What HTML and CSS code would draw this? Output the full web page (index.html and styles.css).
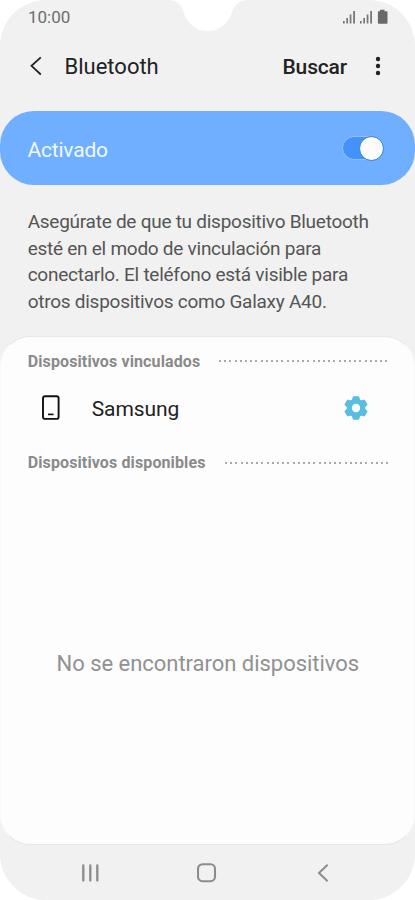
FILE: index.html
```html
<!DOCTYPE html>
<html lang="es">
<head>
<meta charset="utf-8">
<title>Bluetooth</title>
<link rel="stylesheet" href="styles.css">
</head>
<body>
<main class="phone">
  <svg class="notch" width="84" height="32" viewBox="0 0 84 32" aria-hidden="true"><path d="M3 0C10 0 14.500 4 17 11C21 23 29 31 41 31H42C54 31 63 23 66.500 11C69 4 75 0 82 0Z"/></svg>
  <div class="status">
    <span class="time">10:00</span>
    <svg width="46" height="16" viewBox="0 0 46 16" aria-hidden="true">
      <g fill="#777"><path d="M0 12h1.700v2.500H0zM3.300 9h1.700v5.500H3.300zM6.700 5.500h1.700v9H6.700zM10.200 2h1.800v12.500h-1.800z"/><path d="M17 12h1.700v2.500H17zM20.300 9h1.700v5.500h-1.700zM23.700 5.500h1.700v9h-1.700zM27.200 2h1.800v12.500h-1.800z"/></g>
      <path fill="#696969" d="M37 .800h4.500v1.400h2.200q.8 0 .8.8v10.900q0 .8-.8.8h-8q-.8 0-.8-.8V3q0-.8.8-.8H37z"/>
    </svg>
  </div>
  <header class="header">
    <svg width="14" height="20" viewBox="0 0 14 20" aria-hidden="true"><path d="M12.800 1.300L3.500 9.800L12.800 18.500" fill="none" stroke="#222" stroke-width="1.800"/></svg>
    <h1 class="title">Bluetooth</h1>
    <span class="search">Buscar</span>
    <svg class="more" width="6" height="20" viewBox="0 0 6 20" fill="#222" aria-hidden="true"><circle cx="3" cy="3" r="2.200"/><circle cx="3" cy="10" r="2.200"/><circle cx="3" cy="17" r="2.200"/></svg>
  </header>
  <section class="banner">
    <span class="state">Activado</span>
    <span class="toggle"><span class="knob"></span></span>
  </section>
  <p class="info">
    <span>Asegúrate de que tu dispositivo Bluetooth</span>
    <span>esté en el modo de vinculación para</span>
    <span>conectarlo. El teléfono está visible para</span>
    <span>otros dispositivos como Galaxy A40.</span>
  </p>
  <section class="panel">
    <div class="section linked"><h2>Dispositivos vinculados</h2><i class="dots"></i></div>
    <div class="device">
      <svg width="18" height="26" viewBox="0 0 18 26" fill="none" stroke="#111" aria-hidden="true"><rect x="1" y="1.200" width="15.600" height="22.700" rx="2" stroke-width="1.900"/><path d="M6 19.400H11.600" stroke-width="1.600"/></svg>
      <span class="name">Samsung</span>
      <svg class="gear" width="28" height="28" viewBox="-14 -14 28 28" fill="#59bce2" aria-hidden="true"><defs><path id="tooth" d="M-4.800 -7L-3.700 -9L-3.300 -11Q-3.100 -11.700-2.400 -11.700H2.400Q3.100 -11.700 3.300 -11L3.700 -9L4.800 -7Z"/></defs><circle r="6.600" fill="none" stroke="#59bce2" stroke-width="4.800"/><use href="#tooth"/><use href="#tooth" transform="rotate(60)"/><use href="#tooth" transform="rotate(120)"/><use href="#tooth" transform="rotate(180)"/><use href="#tooth" transform="rotate(240)"/><use href="#tooth" transform="rotate(300)"/></svg>
    </div>
    <div class="section"><h2>Dispositivos disponibles</h2><i class="dots"></i></div>
    <div class="empty">No se encontraron dispositivos</div>
  </section>
  <nav class="nav">
    <svg width="20" height="20" viewBox="0 0 20 20" stroke="#8c8c8c" stroke-width="2.300" stroke-linecap="round" aria-hidden="true"><path d="M3.300 2.500v15M10.300 2.500v15M17.300 2.500v15"/></svg>
    <svg width="20" height="20" viewBox="0 0 20 20" fill="none" stroke="#8c8c8c" stroke-width="2.100" aria-hidden="true"><rect x="1" y="1.200" width="17" height="17" rx="4.500"/></svg>
    <svg width="20" height="20" viewBox="0 0 20 20" fill="none" stroke="#8c8c8c" stroke-width="2" aria-hidden="true"><path d="M14.600 1.700L6 10L14.600 18.300"/></svg>
  </nav>
</main>
</body>
</html>
```
FILE: styles.css
```css
* { box-sizing: border-box; }
body { margin: 0; background: #fff; font-family: Roboto, "Liberation Sans", sans-serif; }
h1, h2, p { margin: 0; font-weight: 400; }
svg { display: block; flex: none; }
span, h1, h2, .empty { white-space: nowrap; }
.phone { position: relative; width: 415px; height: 900px; background: #f1f1f1; border-radius: 46px; overflow: hidden; display: flex; flex-direction: column; }
.notch { position: absolute; left: 166px; top: 0; fill: #fff; }
.status { height: 34px; padding: 0 26px 0 28px; display: flex; justify-content: space-between; align-items: center; }
.time { font-size: 17px; line-height: 20px; color: #6d6d6d; }
.header { height: 63px; padding: 0 34px 0 28px; display: flex; align-items: center; color: #222; }
.title { width: 218px; margin-left: 22.500px; padding-top: 2px; font-size: 22px; line-height: 26px; }
.search { width: 92.500px; padding-top: 2px; font-size: 21px; line-height: 26px; font-weight: 500; letter-spacing: -.15px; }
.banner { margin-top: 14px; height: 74px; border-radius: 34px; background: #70aeff; padding: 0 31px 0 27.500px; display: flex; align-items: center; justify-content: space-between; }
.state { padding-top: 3px; color: #f0f8ff; font-size: 21px; line-height: 26px; letter-spacing: -.2px; }
.toggle { width: 42px; height: 24px; border: 1px solid #91c2ff; border-radius: 12px; background: #4393fb; display: flex; justify-content: flex-end; align-items: center; }
.knob { width: 25px; height: 25px; flex: none; border-radius: 50%; border: 1px solid #247fda; background: #fcfcfc; margin-right: -1px; }
.info { padding: 24px 27.700px 0; height: 151px; color: #555; font-size: 19px; line-height: 26.500px; letter-spacing: -.26px; }
.info span { display: block; }
.panel { height: 509px; border-radius: 30px; background: #fdfdfd; border: 1px solid #e7e7e7; border-left-color: #f9f9f9; border-right-color: #f9f9f9; padding: 15px 26px 0 26.700px; }
.section { height: 20px; display: flex; align-items: center; justify-content: space-between; }
.section h2 { color: #8a8a8a; font-size: 16px; line-height: 20px; font-weight: 700; letter-spacing: .12px; }
.dots { width: 163.500px; height: 2px; margin-top: -1px; background: repeating-linear-gradient(90deg, #aaa 0 2px, transparent 2px 5.200px); }
.linked .dots { width: 171px; margin-right: -2px; margin-top: -2px; }
.device { height: 81px; padding: 0 18px 9px 14px; display: flex; align-items: center; }
.name { margin-left: 32px; padding-top: 1px; color: #222; font-size: 21px; line-height: 26px; letter-spacing: -.1px; }
.gear { margin-left: auto; }
.empty { margin-top: 177px; text-align: center; font-size: 22px; line-height: 28px; letter-spacing: -.03px; color: #919191; }
.nav { height: 55px; padding: 0 82px 0 80px; display: flex; align-items: center; justify-content: space-between; }
```
